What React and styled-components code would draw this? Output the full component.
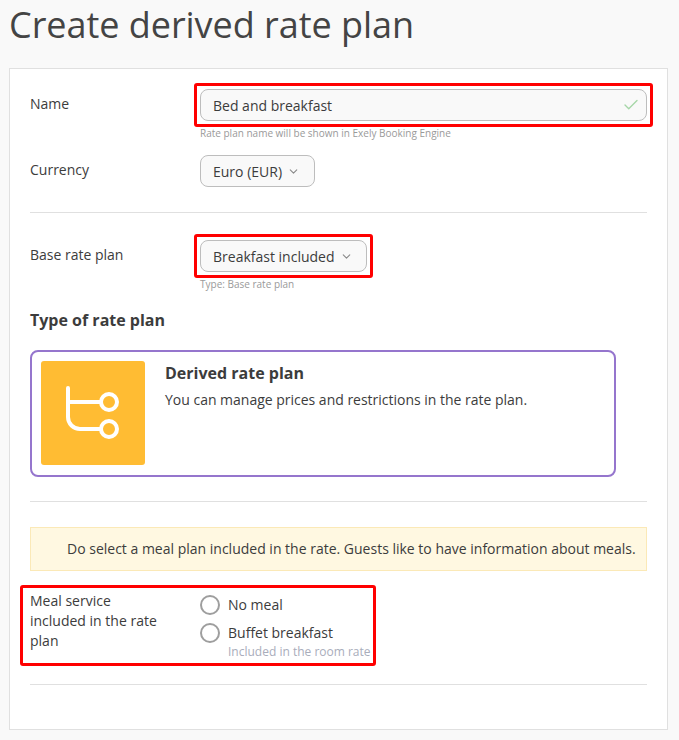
import React from "react";
import styled, { createGlobalStyle } from "styled-components";
import { ChevronDown, Check } from "lucide-react";

const GlobalStyle = createGlobalStyle`
  html, body {
    margin: 0;
    padding: 0;
    background: #f9f9f9;
    font-family: "Open Sans", "Noto Sans", sans-serif;
    color: #3c3c3c;
  }
`;

const Page = styled.div`
  width: 679px;
  height: 740px;
  overflow: hidden;
  padding: 0 11px 0 9px;
  box-sizing: border-box;
`;

const Heading = styled.h1`
  margin: 0;
  height: 68px;
  font-size: 36px;
  line-height: 50px;
  font-weight: 400;
  letter-spacing: -0.04px;
  color: #444;
`;

const Panel = styled.div`
  height: 662px;
  box-sizing: border-box;
  background: #fff;
  border: 1px solid #e0e0e0;
  padding: 20px 20px 0;
`;

const Row = styled.div`
  display: grid;
  grid-template-columns: 170px 1fr;
  margin-top: ${({ $top }) => $top || 0}px;
`;

const Label = styled.div`
  font-size: 14px;
  line-height: 20px;
  padding-top: ${({ $pad }) => $pad ?? 5}px;
  width: 135px;
`;

const Spot = styled.div`
  position: relative;
  width: ${({ $fit }) => ($fit ? "fit-content" : "auto")};
`;

const Highlight = styled.div`
  position: absolute;
  inset: ${({ $inset }) => $inset || "-6px"};
  border: 3px solid #f00;
  border-radius: 3px;
  pointer-events: none;
`;

const Field = styled.div`
  display: flex;
  align-items: center;
  justify-content: space-between;
  height: 32px;
  box-sizing: border-box;
  padding: 0 6px 0 12px;
  background: #f9f9f9;
  border: 1px solid #bdbdbd;
  border-radius: 8px;
  font-size: 14px;
`;

const Select = styled(Field)`
  display: inline-flex;
  gap: 5px;
  padding-right: 13.5px;
`;

const Hint = styled.div`
  font-size: 10px;
  line-height: 14px;
  margin-top: 5px;
  color: #9a9a9a;
`;

const Divider = styled.div`
  height: 1px;
  background: #e0e0e0;
  margin-top: ${({ $top }) => $top}px;
`;

const SectionTitle = styled.h2`
  margin: 17px 0 0;
  font-size: 16px;
  line-height: 24px;
  font-weight: 700;
  color: #3c3c3c;
`;

const TypeCard = styled.div`
  display: flex;
  gap: 20px;
  width: 586px;
  height: 127px;
  box-sizing: border-box;
  margin-top: 18px;
  padding: 9px;
  border: 2px solid #9575cd;
  border-radius: 8px;
`;

const TypeIcon = styled.div`
  flex: 0 0 104px;
  height: 104px;
  background: #ffbc33;
  border-radius: 3px;
`;

const TypeTitle = styled.div`
  font-size: 16px;
  line-height: 24px;
  font-weight: 700;
`;

const TypeText = styled.div`
  margin-top: 5px;
  font-size: 14px;
  line-height: 20px;
  letter-spacing: -0.01px;
`;

const Notice = styled.div`
  margin-top: 25px;
  height: 44px;
  box-sizing: border-box;
  display: flex;
  align-items: center;
  padding: 0 0 2px 36px;
  background: #fff8e1;
  border: 1px solid #fbe9b7;
  font-size: 14px;
  white-space: nowrap;
`;

const MealSpot = styled(Spot)`
  display: grid;
  grid-template-columns: 170px auto;
  width: 340px;
  margin-top: 20px;
`;

const Options = styled.div`
  display: flex;
  flex-direction: column;
  gap: 8px;
  padding-top: 4px;
`;

const Option = styled.div`
  display: grid;
  grid-template-columns: 20px auto;
  column-gap: 8px;
  align-items: center;
  font-size: 14px;
  line-height: 20px;
`;

const Radio = styled.span`
  width: 20px;
  height: 20px;
  box-sizing: border-box;
  border: 2px solid #9e9e9e;
  border-radius: 50%;
`;

const OptionNote = styled.div`
  grid-column: 2;
  margin-top: 1px;
  font-size: 12px;
  line-height: 16px;
  color: #a9adbb;
  white-space: nowrap;
`;

const Chevron = styled(ChevronDown)`
  color: #8a8a8a;
  flex: none;
`;

const DerivedIcon = () => (
  <svg width="104" height="104" viewBox="0 0 104 104" fill="none" stroke="#fff" strokeWidth="4" strokeLinecap="round">
    <path d="M27 27V56a12 12 0 0 0 12 12H60" />
    <path d="M27 41H60" />
    <circle cx="68" cy="41" r="8" />
    <circle cx="68" cy="68" r="8" />
  </svg>
);

export default function App() {
  return (
    <Page>
      <GlobalStyle />
      <Heading>Create derived rate plan</Heading>
      <Panel>
        <Row>
          <Label>Name</Label>
          <div>
            <Spot>
              <Field>
                Bed and breakfast
                <Check size={18} strokeWidth={1.8} color="#a5d6a7" />
              </Field>
              <Highlight />
            </Spot>
            <Hint>Rate plan name will be shown in Exely Booking Engine</Hint>
          </div>
        </Row>
        <Row $top={15}>
          <Label>Currency</Label>
          <div>
            <Select>
              Euro (EUR)
              <Chevron size={13} />
            </Select>
          </div>
        </Row>
        <Divider $top={25} />
        <Row $top={27}>
          <Label>Base rate plan</Label>
          <div>
            <Spot $fit>
              <Select>
                Breakfast included
                <Chevron size={13} />
              </Select>
              <Highlight />
            </Spot>
            <Hint>Type: Base rate plan</Hint>
          </div>
        </Row>
        <SectionTitle>Type of rate plan</SectionTitle>
        <TypeCard>
          <TypeIcon>
            <DerivedIcon />
          </TypeIcon>
          <div>
            <TypeTitle>Derived rate plan</TypeTitle>
            <TypeText>You can manage prices and restrictions in the rate plan.</TypeText>
          </div>
        </TypeCard>
        <Divider $top={24} />
        <Notice>Do select a meal plan included in the rate. Guests like to have information about meals.</Notice>
        <MealSpot>
          <Label $pad={0}>Meal service included in the rate plan</Label>
          <Options>
            <Option>
              <Radio />
              No meal
            </Option>
            <Option>
              <Radio />
              Buffet breakfast
              <OptionNote>Included in the room rate</OptionNote>
            </Option>
          </Options>
          <Highlight $inset="-6px -6px -6px -10px" />
        </MealSpot>
        <Divider $top={24} />
      </Panel>
    </Page>
  );
}
